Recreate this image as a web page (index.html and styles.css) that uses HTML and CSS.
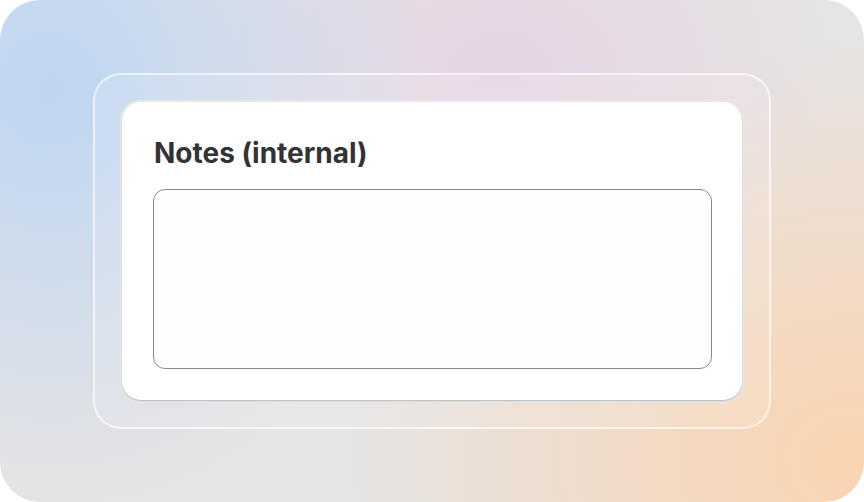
FILE: index.html
```html
<!DOCTYPE html>
<html lang="en">

<head>
  <meta charset="UTF-8" />
  <meta name="viewport" content="width=device-width, initial-scale=1.0" />
  <title>Notes</title>
  <link rel="stylesheet" href="styles.css">
</head>

<body>
  <div class="stage">
    <!-- 外框 -->
    <div class="frame">
      <div class="plate">
        <div class="card">
          <label class="title" for="notes">Notes (internal)</label>
          <textarea id="notes" class="notes"></textarea>
        </div>
      </div>
    </div>
  </div>
</body>

</html>
```
FILE: styles.css
```css
* {
  margin: 0;
  padding: 0;
  box-sizing: border-box;
}

body {
  width: 864px;
  height: 502px;
  background: #fff;
  font-family: Inter, "Noto Sans", sans-serif;
}

.stage {
  width: 864px;
  height: 502px;
  border-radius: 40px;
  overflow: hidden;
  display: flex;
  align-items: center;
  justify-content: center;
  background:
    radial-gradient(ellipse 380px 420px at 50px 90px, rgba(190, 214, 242, 1) 0, rgba(190, 214, 242, 0) 100%),
    radial-gradient(ellipse 340px 240px at 500px 70px, rgba(230, 212, 228, 1) 0, rgba(230, 212, 228, 0) 100%),
    radial-gradient(ellipse 500px 420px at 850px 460px, rgba(250, 212, 176, 1) 0, rgba(250, 212, 176, 0) 100%),
    #e6e4e4;
}

.frame {
  width: 678px;
  height: 356px;
  border: 2px solid rgba(255, 255, 255, 0.65);
  border-radius: 28px;
  background: rgba(255, 255, 255, 0.12);
  padding: 25px 25px 24px 25px;
}

.plate {
  width: 624px;
  height: 303px;
  border-radius: 21px;
  background: #e9e9e9;
  padding: 2px 2px 3px 2px;
}

.card {
  width: 620px;
  height: 298px;
  border-radius: 19px;
  background: #fff;
  box-shadow: 0 1px 2px rgba(0, 0, 0, 0.22);
  padding: 34px 30px 31px 31px;
  display: flex;
  flex-direction: column;
}

.title {
  font-size: 28px;
  font-weight: 700;
  color: #333;
  line-height: 34px;
  margin-left: 1px;
  margin-bottom: 19px;
}

.notes {
  width: 559px;
  height: 180px;
  border: 1px solid #8a8a8a;
  border-radius: 12px;
  background: #fdfdfd;
  resize: none;
  outline: none;
}
```
